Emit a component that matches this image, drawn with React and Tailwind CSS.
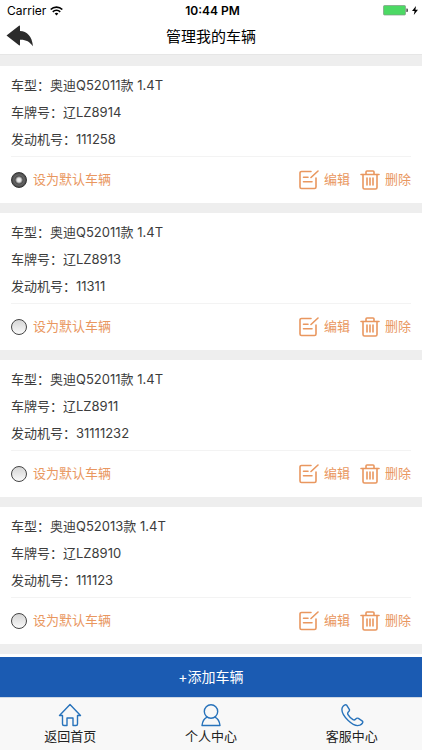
import { useState } from 'react';

const vehicles = [
  { id: 1, model: '奥迪Q52011款 1.4T', plate: '辽LZ8914', engine: '111258' },
  { id: 2, model: '奥迪Q52011款 1.4T', plate: '辽LZ8913', engine: '11311' },
  { id: 3, model: '奥迪Q52011款 1.4T', plate: '辽LZ8911', engine: '31111232' },
  { id: 4, model: '奥迪Q52013款 1.4T', plate: '辽LZ8910', engine: '111123' },
];

function EditIcon() {
  return (
    <svg width="20" height="20" viewBox="0 0 20 20" fill="none" stroke="currentColor" strokeWidth="1.6" strokeLinecap="round" strokeLinejoin="round">
      <path d="M12 1.500H2.500A1.500 1.500 0 0 0 1 3v14a1.500 1.500 0 0 0 1.500 1.500H15.500A1.500 1.500 0 0 0 17 17V8" />
      <path d="M19 1l-7 6.500M4.500 7.300h4.500M4.500 11.800h8.500" />
    </svg>
  );
}

function TrashIcon() {
  return (
    <svg width="20" height="20" viewBox="0 0 20 20" fill="none" stroke="currentColor" strokeWidth="1.6" strokeLinecap="round" strokeLinejoin="round">
      <path d="M1 4.500h18M6 4.500V2a1 1 0 0 1 1-1h6a1 1 0 0 1 1 1v2.500" />
      <path d="M3 4.500V17.500A1.500 1.500 0 0 0 4.500 19h11a1.500 1.500 0 0 0 1.500-1.500V4.500" />
      <path d="M7 8v7M10 8v7M13 8v7" />
    </svg>
  );
}

function StatusBar() {
  return (
    <div className="grid h-[21px] grid-cols-3 items-center pl-[7px] pr-1 text-xs text-black">
      <div className="flex items-center gap-1">
        <span>Carrier</span>
        <svg width="13" height="10" viewBox="0 0 13 10" fill="none" stroke="#000" strokeWidth="1.7">
          <path d="M.7 3.500a8.200 8.200 0 0 1 11.600 0M2.800 5.800a5.200 5.200 0 0 1 7.400 0" />
          <path d="M6.500 9.500L4.700 7.600a2.600 2.600 0 0 1 3.600 0z" fill="#000" stroke="none" />
        </svg>
      </div>
      <span className="text-center font-semibold">10:44 PM</span>
      <div className="flex items-center justify-end gap-1">
        <svg width="25" height="11" viewBox="0 0 25 11">
          <rect x=".5" y=".5" width="22" height="9.500" rx="1" fill="#4cd964" stroke="#7f9a84" strokeWidth=".7" />
          <path d="M23.300 3.500h.7a1 1 0 0 1 1 1v1.500a1 1 0 0 1-1 1h-.7z" fill="#555" />
        </svg>
        <svg width="6" height="9" viewBox="0 0 6 9">
          <path d="M4 0L0 5h2.600L1.800 9 6 3.800H3.400z" fill="#000" />
        </svg>
      </div>
    </div>
  );
}

function VehicleCard({ v, checked, onSelect }) {
  return (
    <li className="border-b-10 border-[#eee] bg-white px-[11px] pt-1.5">
      <div className="pb-[3px] leading-[27px] text-[#3c3c3c]">
        <p>车型：{v.model}</p>
        <p>车牌号：{v.plate}</p>
        <p>发动机号：{v.engine}</p>
      </div>
      <div className="flex h-[47px] items-center justify-between border-t border-[#f3f3f3] text-[#e9975f]">
        <label className="flex items-center gap-1.5">
          <input
            type="radio"
            name="default-vehicle"
            checked={checked}
            onChange={() => onSelect(v.id)}
            className="h-4 w-4 appearance-none rounded-full border border-[#444] bg-linear-to-b from-[#d5d5d5] to-[#fafafa] checked:border-[#333] checked:bg-[radial-gradient(circle,#f5f5f5_0,#ddd_2px,#4a4a4a_4px,#666_5px,#3a3a3a_8px)]"
          />
          设为默认车辆
        </label>
        <div className="flex gap-2.5">
          <button type="button" className="flex items-center gap-[5px]">
            <EditIcon />
            编辑
          </button>
          <button type="button" className="flex items-center gap-[5px]">
            <TrashIcon />
            删除
          </button>
        </div>
      </div>
    </li>
  );
}

function TabLink({ label, children }) {
  return (
    <a href="#" className="flex flex-1 flex-col items-center pt-[5px] leading-[18px] text-[#222]">
      <svg width="24" height="24" viewBox="0 0 24 24" fill="none" stroke="#2873bb" strokeWidth="1.4" strokeLinecap="round" strokeLinejoin="round">
        {children}
      </svg>
      {label}
    </a>
  );
}

export default function App() {
  const [selected, setSelected] = useState(1);

  return (
    <div className="flex h-screen flex-col bg-white font-['Inter','Noto_Sans_CJK_SC',sans-serif] text-[13px]">
      <header className="border-b border-[#e6e6e6]">
        <StatusBar />
        <div className="grid h-[33px] grid-cols-[1fr_auto_1fr] items-center px-1.5">
          <button type="button" aria-label="返回" className="justify-self-start pb-1">
            <svg width="28" height="22" viewBox="0 0 28 22">
              <path d="M.5 10.500L13 .8q1-.6 1 .6V6c7 .3 12 5 13 15.300C23.500 16.500 20 14.500 14 14.700v5q0 1.200-1 .5z" fill="#2b2b2b" />
            </svg>
          </button>
          <h1 className="text-[15px] text-black">管理我的车辆</h1>
        </div>
      </header>

      <main className="min-h-0 flex-1 overflow-y-auto border-t-11 border-[#eee]">
        <ul>
          {vehicles.map((v) => (
            <VehicleCard key={v.id} v={v} checked={selected === v.id} onSelect={setSelected} />
          ))}
        </ul>
      </main>

      <button type="button" className="h-10 bg-[#1b5bb2] text-sm text-white">+添加车辆</button>

      <nav className="flex h-[53px] border-t border-[#cfd8e4] bg-[#f8f8f8]">
        <TabLink label="返回首页">
          <path d="M1.500 12.500L12 1.500l10.500 11h-3V21a1.500 1.500 0 0 1-1.500 1.500h-3V15H9v7.500H6A1.500 1.500 0 0 1 4.500 21v-8.500z" />
        </TabLink>
        <TabLink label="个人中心">
          <circle cx="12" cy="8.500" r="6.700" />
          <path d="M8 14.200c-3 1.500-4.500 4-5 8.300h18c-.5-4.300-2-6.800-5-8.300" />
        </TabLink>
        <TabLink label="客服中心">
          <path d="M2.300 4.500C3.500 2.300 5.500 1 6.800 2.300l2.500 4c.7 1.200-.1 2-1 2.800-.9.900-.9 1.500-.3 2.500 1.200 2 3 3.800 5 5 1 .6 1.700.5 2.500-.4.900-1 1.700-1.500 2.900-.8l4 2.700c1.200 1.200-.5 3.200-2.600 4.100-3 1.200-7.500-.8-11.600-4.700C3.800 13.200 1 8 2.300 4.500z" />
        </TabLink>
      </nav>
    </div>
  );
}
